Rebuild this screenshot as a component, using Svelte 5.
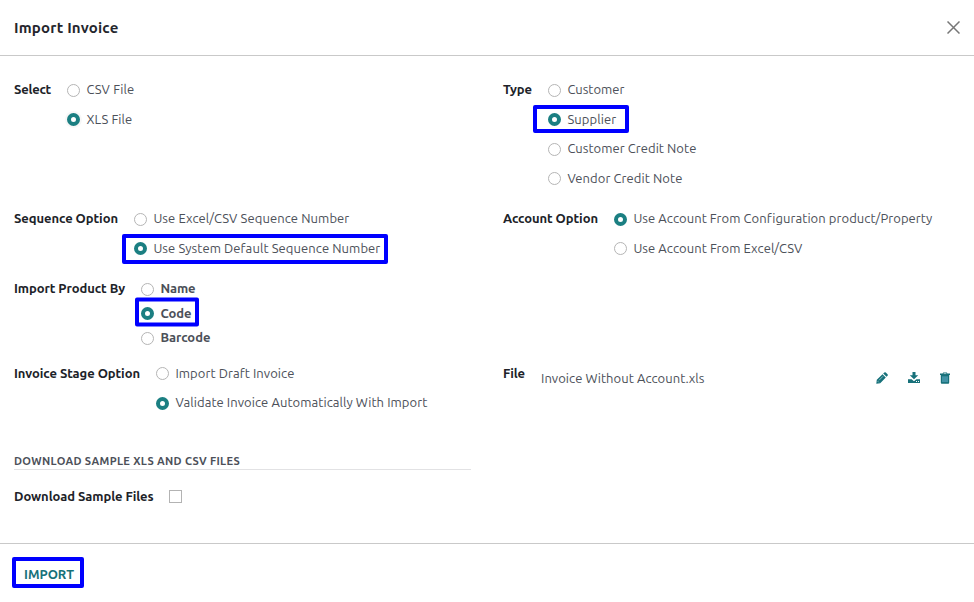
<script>
  const groups = [
    { label: 'Select', labelWidth: 37, gap: 53, options: [
      { text: 'CSV File', width: 48 },
      { text: 'XLS File', width: 46, checked: true, halo: true }
    ] },
    { label: 'Type', labelWidth: 29, gap: 45, options: [
      { text: 'Customer', width: 57 },
      { text: 'Supplier', width: 49, checked: true, mark: [-15, 96, 28, 0] },
      { text: 'Customer Credit Note', width: 129 },
      { text: 'Vendor Credit Note', width: 115 }
    ] },
    { label: 'Sequence Option', labelWidth: 104, gap: 120, options: [
      { text: 'Use Excel/CSV Sequence Number', width: 196 },
      { text: 'Use System Default Sequence Number', width: 227, checked: true, mark: [-12, 266, 30, 1] }
    ] },
    { label: 'Account Option', labelWidth: 95, gap: 111, options: [
      { text: 'Use Account From Configuration product/Property', width: 298.5, checked: true },
      { text: 'Use Account From Excel/CSV', width: 169 }
    ] },
    { label: 'Import Product By', labelWidth: 111, gap: 127, bold: true, options: [
      { text: 'Name', width: 35 },
      { text: 'Code', width: 31, checked: true, mark: [-6, 64, 29, -1] },
      { text: 'Barcode', width: 50 }
    ] },
    { empty: true },
    { label: 'Invoice Stage Option', labelWidth: 126, gap: 142, stage: true, options: [
      { text: 'Import Draft Invoice', width: 119 },
      { text: 'Validate Invoice Automatically With Import', width: 252, checked: true }
    ] },
    { file: true }
  ];

  // Adjusts tracking so a label occupies its allotted width.
  function fit(node, width) {
    const natural = node.getBoundingClientRect().width;
    node.style.letterSpacing = `${(width - natural) / node.textContent.length}px`;
  }
</script>

<div class="dialog">
  <header>
    <h1><span use:fit={104.5}>Import Invoice</span></h1>
    <button class="close" aria-label="Close">
      <svg width="13" height="13" viewBox="0 0 13 13"><path d="M.5.5l12 12M12.5.5L.5 12.5" stroke="#777" stroke-width="1.5" fill="none" /></svg>
    </button>
  </header>

  <main>
    <div class="form">
      {#each groups as g}
        {#if g.empty}
          <div></div>
        {:else if g.file}
          <div class="group file">
            <div class="label file-label"><span use:fit={22}>File</span></div>
            <div class="filename"><span use:fit={163.5}>Invoice Without Account.xls</span></div>
            <div class="actions">
              <svg width="12" height="12" viewBox="0 0 12 12"><path fill="#17717a" d="M.3 11.7l.5-3.9L6.5 2.2l3.3 3.3-5.6 5.7zM7.2 1.5L8.3.5q.8-.7 1.5 0l1.7 1.7q.7.7 0 1.5l-1 1.1z" /><path d="M3 8.3L7 4.3M1.7 9.2l1.2 1.2" stroke="#b9dcdf" stroke-width=".7" /></svg>
              <svg width="12" height="12" viewBox="0 0 12 12"><path fill="#17717a" d="M4.5 0h3v3.2h2.7L6 7.2l-4.2-4h2.7zM0 7.2h3.6L6 9.2l2.4-2H12V11H0z" /><path fill="#fff" d="M8 9h1v1H8zM10 9h1v1h-1z" /></svg>
              <svg width="10" height="12" viewBox="0 0 10 12"><path fill="#17717a" d="M0 1.6h2.6L3.2.4h3.6l.6 1.2H10v1.5H0zM.8 3h8.4v7.5q0 1.2-1 1.2H1.8q-1 0-1-1.2z" /><path d="M3 4.3v5.8M5 4.3v5.8M7 4.3v5.8" stroke="#79bddb" stroke-width=".9" /><path d="M3.6 1.6h2.8" stroke="#fff" stroke-width=".6" /></svg>
            </div>
          </div>
        {:else}
          <div class="group" class:bold={g.bold} class:stage={g.stage}>
            <div class="label" style:width="{g.gap}px"><span use:fit={g.labelWidth}>{g.label}</span></div>
            <div class="options">
              {#each g.options as o}
                <div class="option">
                  <i class="radio" class:checked={o.checked} class:halo={o.halo}></i>
                  <span use:fit={o.width}>{o.text}</span>
                  {#if o.mark}
                    <b class="mark" style:left="{o.mark[0]}px" style:width="{o.mark[1]}px" style:height="{o.mark[2]}px" style:margin-top="{o.mark[3]}px"></b>
                  {/if}
                </div>
              {/each}
            </div>
          </div>
        {/if}
      {/each}
    </div>
    <h2><span use:fit={226}>DOWNLOAD SAMPLE XLS AND CSV FILES</span></h2>
    <div class="sample">
      <div class="label sample-label"><span use:fit={139.5}>Download Sample Files</span></div>
      <i class="checkbox"></i>
    </div>
  </main>

  <footer>
    <button class="import"><span use:fit={50}>IMPORT</span></button>
  </footer>
</div>

<style>
  :global(body) { margin: 0; background: #fff; }
  .dialog {
    box-sizing: border-box;
    width: 974px;
    height: 602px;
    display: flex;
    flex-direction: column;
    overflow: hidden;
    font-family: Ubuntu, 'Noto Sans', sans-serif;
    font-size: 13px;
    line-height: 18px;
    color: #4c5059;
    white-space: nowrap;
  }
  header {
    box-sizing: border-box;
    height: 56px;
    flex: none;
    display: flex;
    align-items: center;
    justify-content: space-between;
    padding: 0 14px;
    border-bottom: 1px solid #c9c9c9;
  }
  h1 { margin: 0; font-size: 15px; font-weight: 600; color: #24262d; }
  button { font: inherit; background: none; border: 0; padding: 0; }
  .close { display: flex; }
  main { flex: none; height: 487px; }
  .form {
    display: grid;
    grid-template-columns: 489px 471px;
    grid-template-rows: 129px 70px 85px 89px;
    padding: 19px 0 0 14px;
  }
  .group { display: flex; align-items: flex-start; }
  .label { height: 29px; line-height: 29px; color: #202228; font-weight: 600; flex: none; }
  .options { display: flex; flex-direction: column; margin-top: -0.5px; }
  .stage .options { margin-top: -1px; }
  .option {
    position: relative;
    display: flex;
    align-items: center;
    height: 29.5px;
    gap: 6.4px;
  }
  .bold .options { padding-top: 2.5px; }
  .bold .option { height: 24.5px; font-weight: 600; }
  .radio {
    box-sizing: border-box;
    width: 13px;
    height: 13px;
    margin-top: 2px;
    border: 1px solid #b5b5b5;
    border-radius: 50%;
    background: #fff;
  }
  .checked { border: 4px solid #1b7f82; }
  .halo { box-shadow: 0 0 0 2px #f7f7f7; }
  .mark {
    position: absolute;
    top: 50%;
    transform: translateY(-50%);
    box-sizing: border-box;
    border: 4px solid #00f;
    border-radius: 2px;
  }
  .file-label { width: 38px; }
  .filename { padding-top: 10px; }
  .actions { display: flex; gap: 20px; padding: 13px 24px 0 0; margin-left: auto; }
  h2 {
    box-sizing: border-box;
    width: 457px;
    height: 22px;
    margin: 0 0 0 14px;
    padding-top: 4px;
    border-bottom: 1px solid #e2e2e4;
    font-size: 11px;
    font-weight: 700;
    line-height: 18px;
    color: #4c5059;
  }
  .sample { display: flex; align-items: center; padding: 12px 0 0 14px; }
  .sample-label { width: 155px; }
  .checkbox { box-sizing: border-box; width: 13px; height: 13px; border: 1px solid #b3b3b3; }
  footer { flex: 1; box-sizing: border-box; border-top: 1px solid #c9c9c9; padding: 13px 12px; }
  .import {
    display: flex;
    align-items: center;
    box-sizing: border-box;
    width: 72px;
    height: 31px;
    padding: 3px 0 0 8px;
    border: 4px solid #00f;
    border-radius: 2px;
    color: #17717a;
    font-weight: 600;
  }
</style>
